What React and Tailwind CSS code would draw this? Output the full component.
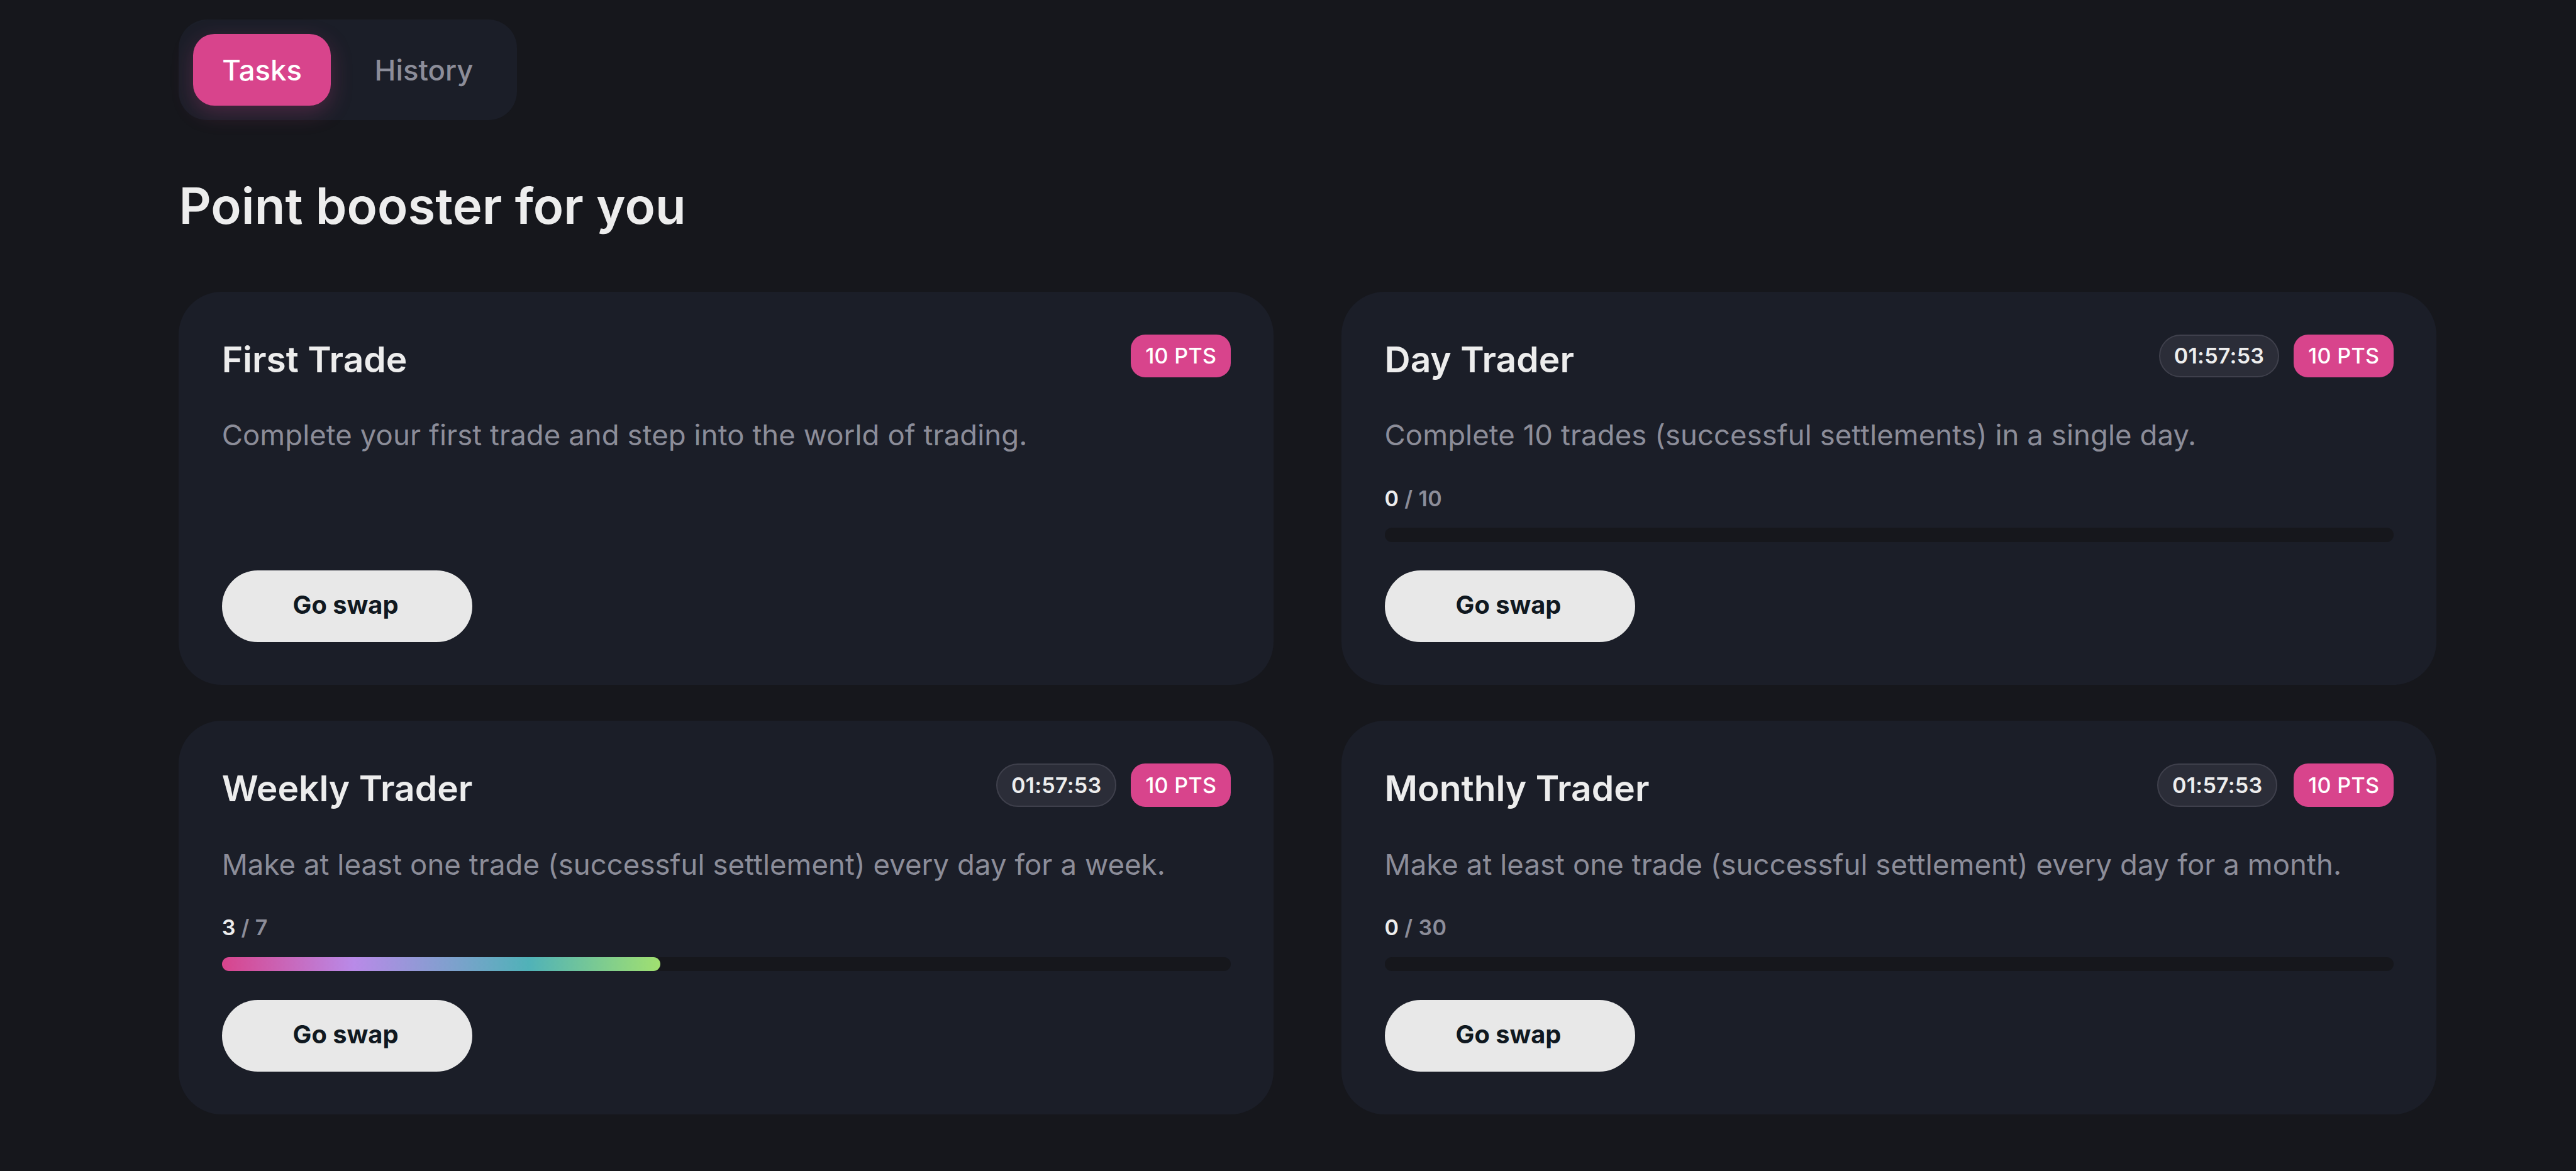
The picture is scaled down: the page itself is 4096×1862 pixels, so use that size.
import { useState } from "react";
import clsx from "clsx";

const TABS = ["Tasks", "History"];

const TASKS = [
  {
    title: "First Trade",
    description: "Complete your first trade and step into the world of trading.",
    points: 10,
  },
  {
    title: "Day Trader",
    description: "Complete 10 trades (successful settlements) in a single day.",
    points: 10,
    timer: "01:57:53",
    progress: { done: 0, total: 10, percent: 0 },
  },
  {
    title: "Weekly Trader",
    description: "Make at least one trade (successful settlement) every day for a week.",
    points: 10,
    timer: "01:57:53",
    progress: { done: 3, total: 7, percent: 43.44 },
  },
  {
    title: "Monthly Trader",
    description: "Make at least one trade (successful settlement) every day for a month.",
    points: 10,
    timer: "01:57:53",
    timerClass: "mr-[2.8px]",
    progress: { done: 0, total: 30, percent: 0 },
  },
];

const Tabs = ({ active, onChange }) => (
  <div className="flex w-fit gap-2 rounded-[45.5px] bg-[#1b1e28] p-2">
    {TABS.map((tab) => (
      <button
        key={tab}
        onClick={() => onChange(tab)}
        className={clsx(
          "flex h-10 items-center justify-center rounded-[34px] pt-[2px] text-[45.5px] font-medium",
          tab === "Tasks" ? "w-[219px]" : "w-[250.3px]",
          tab === active
            ? "bg-[#d8448c] text-white shadow-[0_11px_34px_rgba(216,68,140,0.25)]"
            : "text-[#8c8d99]"
        )}
      >
        {tab}
      </button>
    ))}
  </div>
);

const Progress = ({ done, total, percent }) => (
  <div>
    <p className="pb-px text-[34.13px] leading-[44.5px] font-semibold tracking-[0.3px] text-[#8c8d99]">
      <span className="text-[#ededed]">{done}</span> / {total}
    </p>
    <div className="mt-2 h-2 rounded-full bg-[#16171c]">
      <div
        className="h-full rounded-full bg-[linear-gradient(90deg,#d8448c_0%,#b98ae8_30%,#50b2b8_70%,#a1e070_100%)]"
        style={{ width: `${percent}%` }}
      />
    </div>
  </div>
);

const TaskCard = ({ task }) => (
  <div className="flex h-55 flex-col rounded-[68.3px] bg-[#1b1e28] p-6">
    <div className="flex h-6 items-start justify-between">
      <h3 className="text-[56.9px] leading-[79px] font-semibold text-[#ededed]">{task.title}</h3>
      <div className="flex gap-2">
        {task.timer && (
          <span
            className={clsx(
              "flex h-6 w-[190.6px] items-center justify-center rounded-full border-[2.8px] border-[#3f404c] bg-[#2b2d38] pb-px text-[34.13px] font-semibold tracking-[0.2px] text-[#ededed]",
              task.timerClass
            )}
          >
            {task.timer}
          </span>
        )}
        <span className="flex h-6 w-14 items-center justify-center rounded-[22.8px] bg-[#d8448c] pb-px pl-px text-[34.13px] font-medium tracking-[0.3px] text-white">
          {task.points} PTS
        </span>
      </div>
    </div>
    <p className="mt-5 text-[45.5px] leading-[70px] tracking-[0.07px] text-[#8c8d99]">
      {task.description}
    </p>
    <div className="mt-auto flex flex-col gap-4">
      {task.progress && <Progress {...task.progress} />}
      <button className="flex h-10 w-35 items-center justify-center rounded-full bg-[#e8e8e8] pr-1 pb-[4px] pl-[7px] text-[39.8px] font-bold text-[#101820]">
        Go swap
      </button>
    </div>
  </div>
);

// --spacing scales the whole page up for the large canvas
const App = () => {
  const [active, setActive] = useState("Tasks");

  return (
    <main className="h-[1862px] w-[4096px] overflow-hidden bg-[#16171c] pt-[31.3px] pr-[221.9px] pl-[284.4px] font-['Inter',sans-serif] [--spacing:11.3778px]">
      <Tabs active={active} onChange={setActive} />
      <h1 className="mt-8 text-[79.6px] leading-[90px] font-semibold tracking-[0.07px] text-[#ededed]">
        Point booster for you
      </h1>
      <div className="mt-[92px] grid grid-cols-2 gap-x-[108.1px] gap-y-5">
        {TASKS.map((task) => (
          <TaskCard key={task.title} task={task} />
        ))}
      </div>
    </main>
  );
};

export default App;
